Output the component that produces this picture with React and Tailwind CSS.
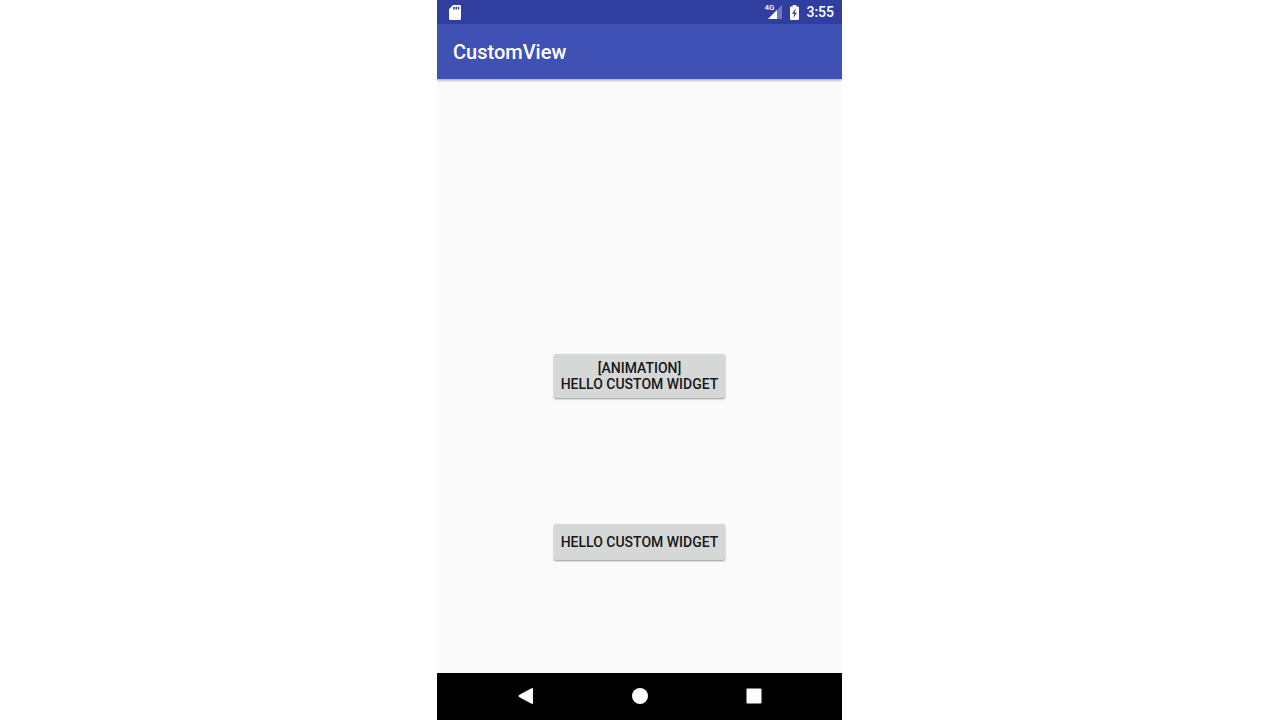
function StorageIcon() {
  return (
    <svg viewBox="0 0 12 15" className="h-[15px] w-3" aria-hidden="true">
      <path
        fill="#fff"
        fillRule="evenodd"
        d="M4 0h6.7Q12 0 12 1.3v12.4q0 1.3-1.3 1.3H1.3Q0 15 0 13.700V4.200zM4.200 1.800v2.600h1.500V1.800zM6.500 1.800v2.600h1.500V1.800zM8.800 1.800v2.600h1.500V1.800z"
      />
    </svg>
  );
}

function SignalIcon() {
  return (
    <svg viewBox="0 0 14 14" className="h-3.5 w-3.5" aria-hidden="true">
      <path fill="#fff" fillOpacity=".3" d="M14 0v14H0z" />
      <path fill="#fff" d="M9 5v9H0z" />
    </svg>
  );
}

function BatteryIcon() {
  return (
    <svg viewBox="0 0 9 15" className="h-[15px] w-[9px]" aria-hidden="true">
      <path
        fill="#fff"
        fillRule="evenodd"
        d="M2.700 0h3.600v1.500h1.700q1 0 1 1V14q0 1-1 1H1q-1 0-1-1V2.500q0-1 1-1h1.700zM5.800 3.500L2 8.800h2.300L3.300 13 7 7.700H4.900z"
      />
    </svg>
  );
}

function StatusBar() {
  return (
    <div className="flex h-6 items-center justify-between bg-[#303f9f] pr-2 pl-3 text-white">
      <StorageIcon />
      <div className="flex items-center gap-[7px]">
        <div className="flex items-center gap-2">
          <div className="relative pl-1">
            <SignalIcon />
            <span className="absolute -top-px left-0 text-[8px] leading-[8px] font-medium">4G</span>
          </div>
          <BatteryIcon />
        </div>
        <span className="text-sm leading-6 font-medium">3:55</span>
      </div>
    </div>
  );
}

function RaisedButton({ children }) {
  return (
    <button
      type="button"
      className="rounded-xs bg-[#d6d7d7] px-[7px] py-1.5 text-center text-sm leading-4 font-medium text-[#171717] uppercase shadow-[0_1px_2px_rgba(0,0,0,0.4)]"
    >
      {children}
    </button>
  );
}

function NavButton({ label, children }) {
  return (
    <button type="button" aria-label={label} className="flex h-full w-[114px] items-center justify-center">
      <svg viewBox="0 0 16 16" className="h-4 w-4" fill="#fff" aria-hidden="true">
        {children}
      </svg>
    </button>
  );
}

export default function App() {
  return (
    <div className="flex min-h-screen justify-center bg-white pr-px font-[Roboto,sans-serif]">
      <div className="flex w-full max-w-[405px] flex-col bg-[#fafafa]">
        <StatusBar />
        <header className="flex h-[55px] items-center bg-[#3f51b5] px-4 shadow-[0_1px_3px_rgba(0,0,0,0.4)] [clip-path:inset(0_0_-4px_0)]">
          <h1 className="text-xl leading-6 font-medium text-white">CustomView</h1>
        </header>
        <main className="flex grow flex-col items-center justify-end gap-[126px] pb-[113px]">
          <RaisedButton>
            [Animation]
            <br />
            Hello Custom Widget
          </RaisedButton>
          <RaisedButton>
            <span className="block py-1">Hello Custom Widget</span>
          </RaisedButton>
        </main>
        <nav className="flex h-[47px] items-center justify-center bg-black pb-px">
          <NavButton label="Back">
            <path d="M14 0Q15 0 15 1V15q0 1-1 1L1 9Q0 8 1 7z" />
          </NavButton>
          <NavButton label="Home">
            <circle cx="8" cy="8" r="8" />
          </NavButton>
          <NavButton label="Recent apps">
            <rect x="0.500" y="0.500" width="15" height="15" rx="1" />
          </NavButton>
        </nav>
      </div>
    </div>
  );
}
